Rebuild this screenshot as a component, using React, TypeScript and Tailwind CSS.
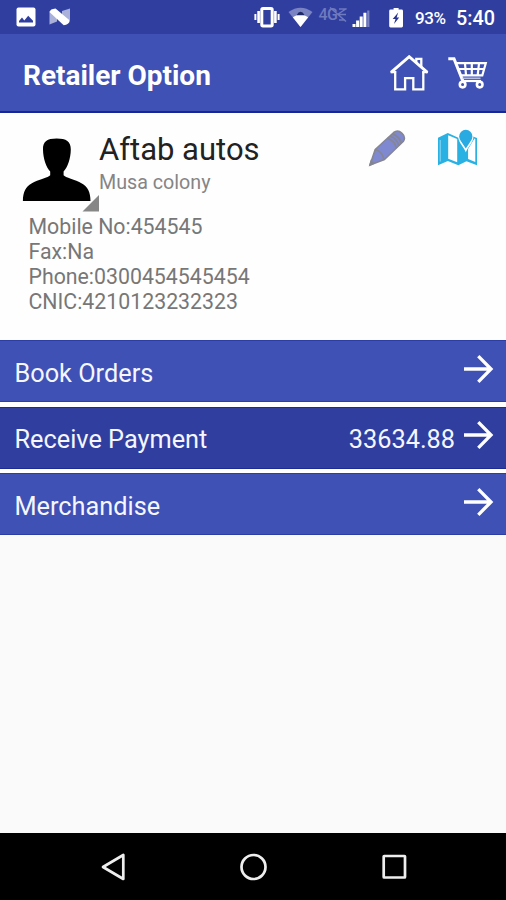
import type { ReactNode } from "react";

function ImageIcon() {
  return (
    <svg className="ml-[16px] h-[20px] w-[20px]" viewBox="0 0 20 20">
      <rect x="0.5" y="0.5" width="19" height="19" rx="2" fill="#fff" />
      <path d="M3 15.5V14l3-3.5 2.3 3 3.9-4.7 4.8 5v1.7Z" fill="#303f9f" />
    </svg>
  );
}

function NougatIcon() {
  return (
    <svg className="ml-[13px] h-[18px] w-[22px]" viewBox="0 0 22 18">
      <path d="M.5 3v13.5L8 13.5V4ZM13 3v10l8-1V.5Z" fill="#a9b0da" />
      <path d="M.7 4.2Q1 1 6.5.6L20.8 12.6Q20 17 14.7 17.2Z" fill="#fff" />
    </svg>
  );
}

function StatusIcons() {
  return (
    <svg className="h-[34px] w-[152px]" viewBox="254 0 152 34">
      <g fill="none" stroke="#fff">
        <rect x="261.8" y="8.5" width="10.4" height="17.4" rx="1.2" strokeWidth="3" />
        <path d="M258.6 11v12M275.4 11v12" strokeWidth="2.6" />
        <path d="M255.4 14v6M278.6 14v6" strokeWidth="2" />
      </g>
      <path d="M288.5 12.1Q300.5 3.2 312.5 12.1L300.5 27Z" fill="#7a84c3" />
      <path d="M292.8 17.2Q300.5 12 308.2 17.2L300.5 27Z" fill="#fff" />
      <path d="M296.5 15.2Q300.5 8.5 304.7 15.2Z" fill="#202a66" />
      <text x="318.5" y="19.5" fill="#6f7abf" fontSize="16" fontWeight="500" letterSpacing="-0.5">4G</text>
      <path d="m330 7.5 16 14M337.5 14.5l9-6M339 9h7.5M339 14.5h7M339 20h6" fill="none" stroke="#6f7abf" strokeWidth="1.5" />
      <path d="M354 27v-3M357.6 27v-6.5M361.2 27V16.5M364.9 27V12.8" stroke="#fff" strokeWidth="3" />
      <path d="M368.3 27V10.5" stroke="#7a84c3" strokeWidth="2.2" />
      <path d="M389.2 11q0-1.4 1.4-1.4h3V8h5v1.6h3q1.4 0 1.4 1.4v15q0 1.4-1.4 1.4h-11q-1.4 0-1.4-1.4Z" fill="#fff" />
      <path d="M398.2 12.5 392.7 19h2.8l-1.5 5 5.2-6.5h-2.6Z" fill="#26348d" />
    </svg>
  );
}

function HomeIcon() {
  return (
    <svg className="h-[36px] w-[40px]" viewBox="389 56 40 36" fill="none" stroke="#fff" strokeWidth="2.3">
      <path d="M416.3 63.5v-3.7h5v8.6M395.2 72v18.3h9.9V79.2h8.2v11.1h10V72" />
      <path d="m391 73.4 18.2-15.7 18.2 15.7" strokeWidth="2.9" />
      <path d="M390.5 73.4h5.6M422.3 73.4h5.6" strokeWidth="1.8" />
    </svg>
  );
}

function CartIcon() {
  return (
    <svg className="ml-[19px] h-[34px] w-[40px]" viewBox="448 57 40 34" fill="none" stroke="#fff" strokeWidth="2.2">
      <path d="M448.3 59.8h5.7l8.8 22.1" strokeWidth="3" />
      <path d="M456.7 64.2h29.1l-3.5 12.1h-20.9M458.8 70h25M465 64.5l1 11.5M471.8 64.5V76M479 64.5 477.7 76" />
      <path d="M462.3 79.2h18.2" stroke="#c8cdeb" strokeWidth="1.3" />
      <path d="M462.5 82H481" />
      <circle cx="462.6" cy="85.6" r="2.8" fill="#3f51b5" strokeWidth="2.6" />
      <circle cx="479.7" cy="85.6" r="2.8" fill="#3f51b5" strokeWidth="2.6" />
    </svg>
  );
}

function Avatar() {
  return (
    <svg className="ml-[22px] mt-[24px] h-[76px] w-[77px] shrink-0" viewBox="22 137 77 76">
      <path d="M56.7 138.5c-9.5 0-14 3-13.7 11 .1 9.3 3.3 18.3 7.2 22v3.8c-1.5 2.2-12 4.3-18.7 8.2-5.6 3.2-8.6 8.5-8.6 17.5h67.6c0-9-3-14.3-8.6-17.5-6.7-3.9-16.8-6-18.3-8.2v-3.8c3.9-3.7 7.1-12.7 7.2-22 .2-8-4.6-11-14.1-11Z" />
      <path d="M99 195v16.5H82.5Z" fill="#878787" />
    </svg>
  );
}

function PencilIcon() {
  return (
    <svg className="absolute left-[368px] top-[16px] h-[40px] w-[40px]" viewBox="368 129 40 40" stroke="#858694" strokeWidth="1.6">
      <path d="m370 165 5.2-15.5 18.5-17c5.5-4 13.5 3 9.5 9L384.5 159.5Z" fill="#7f89d1" strokeLinejoin="round" />
      <path d="M375.2 149.5c4 1.2 7.8 5 8.8 10.5M387.5 138.2c4.5 1.8 8 5.3 8.8 10M390 136c4.5 1.8 7.8 5 8.7 9.7M392.5 133.8c4.5 1.7 7.7 4.7 8.6 9.3" fill="none" strokeWidth="1.8" />
      <path d="m370 165 1.2-4 2.6 2.2Z" fill="#777b91" />
    </svg>
  );
}

function MapIcon() {
  return (
    <svg className="absolute left-[436px] top-[16px] h-[38px] w-[43px]" viewBox="436 129 43 38">
      <path d="m438 137.8 9.8-4.8 10.5 4.7 8-3.7 10.7 4v27.2l-10.5-4-8.2 4.1-10.5-4.2-9.8 4.2Z" fill="#29b1e4" />
      <path d="m448.2 135.3 9 3.8v23.2l-9-3.6ZM468.1 149l6.4-10.4.8.4v22.9l-7.2-2.8Z" fill="#fff" />
      <path d="M465.8 150.3c-2.4-5.2-6.8-8.1-6.8-13.6a6.8 6.8 0 0 1 13.6 0c0 5.5-4.4 8.4-6.8 13.6Z" fill="#29abe2" stroke="#fff" strokeWidth="1.6" />
      <circle cx="465.8" cy="136.4" r="6.6" fill="#29abe2" />
      <path d="M440.2 140v21.5" stroke="#94d8f2" strokeWidth="1" />
    </svg>
  );
}

function ArrowIcon() {
  return (
    <svg className="mb-[5px] h-[30px] w-[30px]" viewBox="0 0 30 30" fill="none" stroke="#fff" strokeWidth="3.3">
      <path d="M0 15h27M14.3 2.2 27 15 14.3 27.8" />
    </svg>
  );
}

function OptionRow({ label, value, className }: { label: string; value?: ReactNode; className: string }) {
  return (
    <div className={`flex h-[62px] items-center border-y pl-[14.5px] pr-[12px] text-[25.3px] text-[#f5f6ff] ${className}`}>
      <span className="mt-[5px]">{label}</span>
      <span className="ml-auto mr-[9px] mt-[5px]">{value}</span>
      <ArrowIcon />
    </div>
  );
}

export default function App() {
  return (
    <div className="flex h-[900px] w-[506px] flex-col overflow-hidden whitespace-nowrap bg-[#fafafa] font-['Roboto',sans-serif]">
      <header className="flex h-[34px] shrink-0 items-center bg-[#303f9f] text-white">
        <ImageIcon />
        <NougatIcon />
        <div className="ml-auto flex h-full items-center pr-[11px]">
          <StatusIcons />
          <span className="ml-[9px] mt-[3px] w-[32px] text-[17px] font-medium tracking-[-0.4px]">93%</span>
          <span className="ml-[9px] mt-[3px] w-[39px] text-[19.8px] font-medium">5:40</span>
        </div>
      </header>
      <div className="flex h-[79px] shrink-0 items-center border-b-2 border-[#17279a] bg-[#3f51b5] pl-[23px] pr-[18px] text-white">
        <h1 className="mt-[6px] text-[28px] font-bold tracking-[-0.02px]">Retailer Option</h1>
        <div className="ml-auto flex items-center">
          <HomeIcon />
          <CartIcon />
        </div>
      </div>
      <section className="relative h-[227px] shrink-0 bg-[#fefefe]">
        <div className="flex h-[101px]">
          <Avatar />
          <div className="pt-[19px]">
            <h2 className="text-[31px] leading-[36px] text-[#222]">Aftab autos</h2>
            <p className="mt-[3px] text-[19.7px] leading-[24px] text-[#858585]">Musa colony</p>
          </div>
        </div>
        <div className="pl-[28.5px] text-[21.3px] leading-[25px] text-[#777]">
          <p>Mobile No:454545</p>
          <p>Fax:Na</p>
          <p>Phone:0300454545454</p>
          <p>CNIC:4210123232323</p>
        </div>
        <PencilIcon />
        <MapIcon />
      </section>
      <nav className="flex flex-1 flex-col gap-[4.5px] bg-[linear-gradient(#fff_195px,#fafafa_195px)]">
        <OptionRow label="Book Orders" className="border-[#2c3da8] bg-[#3f51b5]" />
        <OptionRow label="Receive Payment" value="33634.88" className="border-[#1c2c94] bg-[#303f9f]" />
        <OptionRow label="Merchandise" className="border-[#2c3da8] bg-[#3f51b5]" />
      </nav>
      <footer className="h-[67px] shrink-0 bg-black">
        <svg className="h-[67px] w-[506px]" viewBox="0 833 506 67" fill="none" stroke="#eee" strokeWidth="2.7" strokeLinejoin="round">
          <path d="M103 867 123.3 855v24Z" />
          <circle cx="253.5" cy="867" r="12" />
          <rect x="383.7" y="856" width="21.3" height="21.5" rx="0.5" />
        </svg>
      </footer>
    </div>
  );
}
